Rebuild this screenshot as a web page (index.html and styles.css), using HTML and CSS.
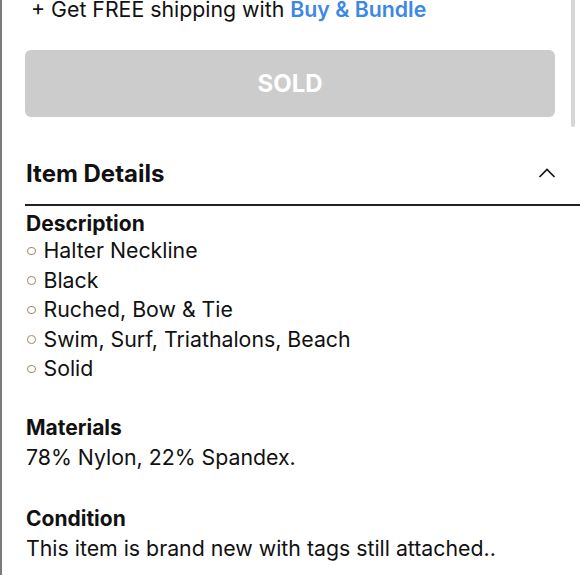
FILE: index.html
```html
<!DOCTYPE html>
<html>
<head>
<meta charset="utf-8">
<link rel="stylesheet" href="styles.css">
</head>
<body>
<div class="page">
  <div class="content">
    <p class="shipping">+ Get FREE shipping with <span class="bundle">Buy &amp; Bundle</span></p>
    <div class="sold">SOLD</div>
    <div class="details-head">
      <h2 class="details-title">Item Details</h2>
      <svg class="chevron" width="18" height="12" viewBox="0 0 18 12"><path d="M1.5 10 L9 2.5 L16.5 10" fill="none" stroke="#111" stroke-width="1.6"/></svg>
    </div>
    <div class="details-body">
      <section class="block">
        <h3 class="label">Description</h3>
        <ul class="bullets">
          <li>Halter Neckline</li>
          <li>Black</li>
          <li>Ruched, Bow &amp; Tie</li>
          <li>Swim, Surf, Triathalons, Beach</li>
          <li>Solid</li>
        </ul>
      </section>
      <section class="block block-mat">
        <h3 class="label">Materials</h3>
        <p class="text">78% Nylon, 22% Spandex.</p>
      </section>
      <section class="block">
        <h3 class="label">Condition</h3>
        <p class="text">This item is brand new with tags still attached..</p>
      </section>
    </div>
  </div>
  <div class="scrollbar"></div>
</div>
</body>
</html>
```
FILE: styles.css
```css
html, body {
  margin: 0;
  padding: 0;
  background: #fff;
}
body {
  font-family: Inter, "Liberation Sans", Arial, sans-serif;
  color: #111;
  width: 580px;
  height: 580px;
  overflow: hidden;
}
.page {
  position: relative;
  height: 580px;
  border-left: 2px solid #7a7a7a;
  box-sizing: border-box;
}
.content {
  padding-left: 24px;
}
.shipping {
  margin: -5px 0 0 5px;
  font-size: 21.3px;
  line-height: 28px;
  color: #111;
}
.bundle {
  color: #3d88e6;
  font-weight: 600;
}
.sold {
  margin-top: 27px;
  width: 530px;
  height: 67px;
  margin-left: -1px;
  border-radius: 6px;
  background: #cccccc;
  color: #fff;
  font-weight: 700;
  font-size: 24px;
  display: flex;
  align-items: center;
  justify-content: center;
}
.details-head {
  margin-top: 36px;
  display: flex;
  align-items: center;
  justify-content: space-between;
  padding-right: 24px;
  height: 40px;
  border-bottom: 2px solid #222;
  padding-bottom: 11px;
  margin-left: -1px;
}
.details-title {
  margin: 0 0 0 1px;
  font-size: 24px;
  font-weight: 700;
}
.chevron {
  display: block;
}
.details-body {
  padding-top: 3px;
  font-size: 21.3px;
  line-height: 29.5px;
}
.block {
  margin-bottom: 29.5px;
}
.block-mat {
  margin-bottom: 32px;
}
.label {
  margin: 0;
  font-size: 21px;
  font-weight: 700;
}
.text {
  margin: 0;
}
.bullets {
  list-style: none;
  margin: -2.5px 0 0 0;
  padding: 0;
}
.bullets li {
  display: flex;
  align-items: center;
}
.bullets li::before {
  content: "";
  width: 6.5px;
  height: 6.5px;
  border: 1.5px solid #9a8a68;
  border-radius: 50%;
  margin-right: 8px;
  margin-left: 1px;
}
.scrollbar {
  position: absolute;
  right: 5px;
  top: 0;
  width: 4px;
  height: 132px;
  border-radius: 2px;
  background: #d6d6d6;
}
```
